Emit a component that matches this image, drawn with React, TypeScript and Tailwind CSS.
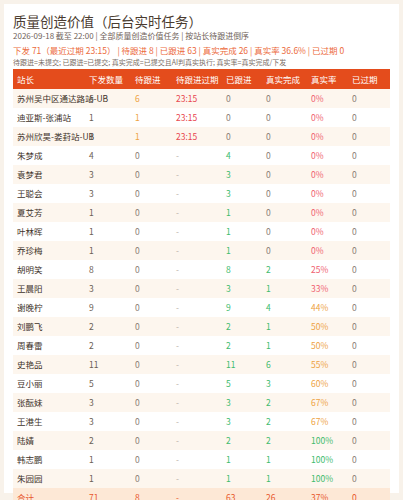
import React from 'react';

type Row = [string, number, number, string, number, number, string, number];

const rows: Row[] = [
  ["苏州吴中区通达路站-UB", 6, 6, "23:15", 0, 0, "0%", 0],
  ["迪亚斯-张浦站", 1, 1, "23:15", 0, 0, "0%", 0],
  ["苏州欣昊-娄葑站-UB", 1, 1, "23:15", 0, 0, "0%", 0],
  ["朱梦成", 4, 0, "-", 4, 0, "0%", 0],
  ["袁梦君", 3, 0, "-", 3, 0, "0%", 0],
  ["王聪会", 3, 0, "-", 3, 0, "0%", 0],
  ["夏艾芳", 1, 0, "-", 1, 0, "0%", 0],
  ["叶林晖", 1, 0, "-", 1, 0, "0%", 0],
  ["乔珍梅", 1, 0, "-", 1, 0, "0%", 0],
  ["胡明笑", 8, 0, "-", 8, 2, "25%", 0],
  ["王晨阳", 3, 0, "-", 3, 1, "33%", 0],
  ["谢晚柠", 9, 0, "-", 9, 4, "44%", 0],
  ["刘鹏飞", 2, 0, "-", 2, 1, "50%", 0],
  ["周春雷", 2, 0, "-", 2, 1, "50%", 0],
  ["史艳品", 11, 0, "-", 11, 6, "55%", 0],
  ["豆小丽", 5, 0, "-", 5, 3, "60%", 0],
  ["张酝妹", 3, 0, "-", 3, 2, "67%", 0],
  ["王港生", 3, 0, "-", 3, 2, "67%", 0],
  ["陆婧", 2, 0, "-", 2, 2, "100%", 0],
  ["韩志鹏", 1, 0, "-", 1, 1, "100%", 0],
  ["朱园园", 1, 0, "-", 1, 1, "100%", 0],
];

const headers = ["站长", "下发数量", "待跟进", "待跟进过期", "已跟进", "真实完成", "真实率", "已过期"];
const widths = ["w-[72px]", "w-[46px]", "w-[41px]", "w-[50px]", "w-[40px]", "w-[45px]", "w-[41px]", "w-[42px]"];

const rateColor = (r: string) => {
  const n = parseInt(r);
  if (n >= 100) return "text-[#3dbb6c]";
  if (n >= 40) return "text-[#eea243]";
  return "text-[#f0606e]";
};

const Cell = ({ i, className = "", children }: { i: number; className?: string; children: React.ReactNode }) => (
  <div className={`${widths[i]} shrink-0 pl-[4px] whitespace-nowrap ${className}`}>{children}</div>
);

const App = () => {
  return (
    <div className="min-h-screen bg-[#f8f2ea] px-[4px] pt-[4px]" style={{ fontFamily: '"Noto Sans CJK SC", "Noto Sans", sans-serif' }}>
      <div className="h-[489px] bg-white px-[9px] pt-[8px]">
        <h1 className="text-[13.5px] leading-[18px] text-[#4a3b2f]">质量创造价值（后台实时任务）</h1>
        <p className="text-[8px] leading-[11px] text-[#6f6259]">
          2026-09-18 截至 22:00 | 全部质量创造价值任务 | 按站长待跟进倒序
        </p>
        <p className="mt-[4px] text-[8.5px] leading-[11px] text-[#ec6a3c]">
          下发 71（最近过期 23:15） | 待跟进 8 | 已跟进 63 | 真实完成 26 | 真实率 36.6% | 已过期 0
        </p>
        <p className="mt-[1px] text-[7px] leading-[10px] text-[#7a6e66]">
          待跟进=未提交; 已跟进=已提交; 真实完成=已提交且AI判真实执行; 真实率=真实完成/下发
        </p>

        <div className="mt-[2px] text-[8.5px]">
          <div className="flex h-[20px] items-center bg-[#e44c1c] text-white">
            {headers.map((h, i) => (
              <Cell key={h} i={i}>{h}</Cell>
            ))}
          </div>
          {rows.map((r, idx) => (
            <div key={r[0]} className={`flex h-[19px] items-center ${idx % 2 === 0 ? "bg-[#fdf6ee]" : "bg-white"}`}>
              <Cell i={0} className="text-[#3e3229]">{r[0]}</Cell>
              <Cell i={1} className="text-[#6b5e54]">{r[1]}</Cell>
              <Cell i={2} className={r[2] > 0 ? "text-[#eea243]" : "text-[#8a7d74]"}>{r[2]}</Cell>
              <Cell i={3} className={r[3] === "-" ? "text-[#b8ada5]" : "text-[#e8464e]"}>{r[3]}</Cell>
              <Cell i={4} className={r[4] > 0 ? "text-[#3dbb6c]" : "text-[#8a7d74]"}>{r[4]}</Cell>
              <Cell i={5} className={r[5] > 0 ? "text-[#3dbb6c]" : "text-[#8a7d74]"}>{r[5]}</Cell>
              <Cell i={6} className={rateColor(r[6])}>{r[6]}</Cell>
              <Cell i={7} className="text-[#8a7d74]">{r[7]}</Cell>
            </div>
          ))}
          <div className="flex h-[19px] items-center bg-[#fde8d6] text-[#e8572c]">
            <Cell i={0}>合计</Cell>
            <Cell i={1}>71</Cell>
            <Cell i={2}>8</Cell>
            <Cell i={3}>-</Cell>
            <Cell i={4}>63</Cell>
            <Cell i={5}>26</Cell>
            <Cell i={6}>37%</Cell>
            <Cell i={7}>0</Cell>
          </div>
        </div>
      </div>
    </div>
  );
};

export default App;
